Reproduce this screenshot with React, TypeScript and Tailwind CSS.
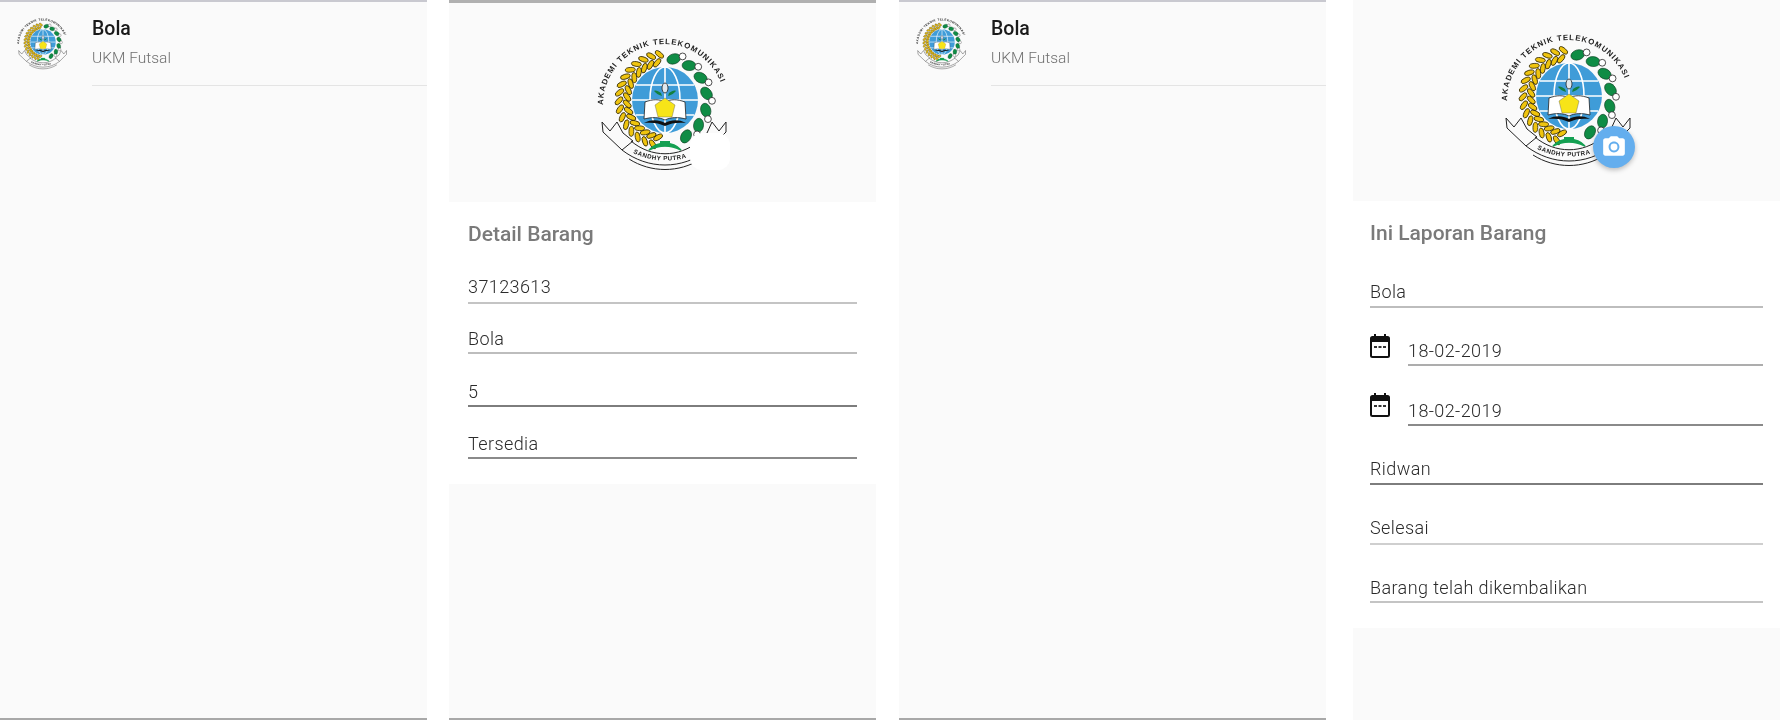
const font = { fontFamily: "Roboto, 'Liberation Sans', sans-serif" };

const grainAngles = Array.from({ length: 16 }, (_, i) => 258 - i * 10.5);
const leafAngles = Array.from({ length: 7 }, (_, i) => -78 + i * 23);

function polar(r: number, deg: number) {
  const a = (deg * Math.PI) / 180;
  return { x: 70 + r * Math.cos(a), y: 65 + r * Math.sin(a) };
}

function Logo({ id, className }: { id: string; className: string }) {
  return (
    <svg viewBox="0 0 140 140" className={className}>
      <defs>
        <path id={`${id}-top`} d="M8 70 A61 61 0 0 1 130 70" />
        <path id={`${id}-bottom`} d="M38 118 Q70 133 104 118" />
      </defs>
      <text fontSize="7.8" fontWeight="700" fill="#222" letterSpacing="1" fontFamily="'Liberation Sans', sans-serif">
        <textPath href={`#${id}-top`}>AKADEMI TEKNIK TELEKOMUNIKASI</textPath>
      </text>
      <circle cx="70" cy="65" r="33" fill="#3f9cd8" />
      <g fill="none" stroke="#fff" strokeWidth="1.6">
        <ellipse cx="70" cy="65" rx="15" ry="33" />
        <path d="M70 32V98M41 50H99M37 65H103M41 80H99" />
      </g>
      {grainAngles.map((deg) => {
        const a = polar(38, deg);
        const b = polar(46, deg + 5);
        return (
          <g key={deg} fill="#efc40f" stroke="#2e2604" strokeWidth="0.8">
            <ellipse cx={a.x} cy={a.y} rx="5" ry="2.4" transform={`rotate(${deg + 50} ${a.x} ${a.y})`} />
            <ellipse cx={b.x} cy={b.y} rx="5" ry="2.4" transform={`rotate(${deg - 40} ${b.x} ${b.y})`} />
          </g>
        );
      })}
      {leafAngles.map((deg, i) => {
        const p = polar(42, deg);
        const q = polar(47, deg + 10);
        return (
          <g key={deg}>
            <ellipse cx={p.x} cy={p.y} rx="7" ry="5" fill="#0f8c45" stroke="#0a3d20" strokeWidth="0.6" transform={`rotate(${deg + 60} ${p.x} ${p.y})`} />
            {i < 6 && <circle cx={q.x} cy={q.y} r="3.4" fill="#fff" stroke="#222" strokeWidth="0.8" />}
          </g>
        );
      })}
      <path d="M66 58c-3-2-5-3-7-2 2 2 4 4 8 5zM74 58c3-2 5-3 7-2-2 2-4 4-8 5z" fill="#14803f" />
      <ellipse cx="70" cy="53" rx="3" ry="5" fill="#dfe8ee" stroke="#222" strokeWidth="0.8" />
      <path d="M50 67c8-3 14-3 20 0 6-3 12-3 20 0l1 17c-8-2-15-2-21 1-6-3-13-3-21-1z" fill="#fff" stroke="#222" strokeWidth="0.8" />
      <path d="M49 88c8-4 15-3 21 0 6-3 13-4 21 0-8-1-15 0-21 3-6-3-13-4-21-3z" fill="#111" />
      <path d="M70 63l10 7-3 12H63l-3-12z" fill="#f7e418" stroke="#555" strokeWidth="0.4" />
      <path d="M54 115c8-9 24-9 32 0-10-5-22-5-32 0z" fill="#14a052" stroke="#14a052" strokeWidth="1.4" />
      <path d="M65 106h10v3H65z" fill="#14a052" />
      <g fill="none" stroke="#222" strokeWidth="1">
        <path d="M7 87l8 9 7-9 6 11 10 8-11 9L8 97z" />
        <path d="M131 87l-7 9-7-9-5 11-10 8 11 9 18-18z" />
        <path d="M27 115c26 20 60 20 86 0" />
        <path d="M36 106c20 17 48 17 68 0" />
        <path d="M34 124c22 14 50 14 72 0" />
      </g>
      <text fontSize="6.2" fontWeight="700" fill="#222" letterSpacing="0.5" fontFamily="'Liberation Sans', sans-serif">
        <textPath href={`#${id}-bottom`}>SANDHY PUTRA</textPath>
      </text>
    </svg>
  );
}

function CalendarIcon() {
  return (
    <svg viewBox="0 0 20 24" className="w-[20px] h-[24px] shrink-0">
      <path d="M5 0v4M15 0v4" stroke="#111" strokeWidth="2" />
      <rect x="1" y="3" width="18" height="20" rx="1.5" fill="none" stroke="#111" strokeWidth="2" />
      <rect x="1" y="3" width="18" height="5" fill="#111" />
      <path d="M4 12h3v2H4zM8.5 12h3v2h-3zM13 12h3v2h-3z" fill="#333" />
    </svg>
  );
}

function Field({ text, className }: { text: string; className: string }) {
  return (
    <div className={`flex items-end text-[18px] font-light leading-[24px] tracking-[0.4px] text-[#2b2b2b] ${className}`}>
      {text}
    </div>
  );
}

function ListPanel({ id, className }: { id: string; className: string }) {
  return (
    <div className={`w-[427px] h-full bg-[#fafafa] border-t-2 border-t-[#c9c9d0] border-b-2 border-b-[#a8a8a8] shrink-0 ${className}`}>
      <div className="flex">
        <div className="w-[92px] shrink-0 pl-[16px] pt-[15px]">
          <Logo id={id} className="w-[54px] h-[54px]" />
        </div>
        <div className="flex-1 h-[84px] border-b border-[#e4e4e4]">
          <div className="text-[19.5px] font-medium leading-[24px] mt-[15px] text-[#1a1a1a]">Bola</div>
          <div className="text-[15.5px] font-light leading-[20px] mt-[7px] text-[#6f6f6f]">UKM Futsal</div>
        </div>
      </div>
    </div>
  );
}

export default function App() {
  return (
    <div className="flex w-[1780px] h-[720px] bg-white overflow-hidden blur-[0.4px]" style={font}>
      <ListPanel id="a" className="" />

      <div className="w-[427px] h-full ml-[22px] bg-[#fafafa] border-t-[3px] border-t-[#b0b0b0] border-b-2 border-b-[#a8a8a8] shrink-0">
        <div className="relative h-[199px] flex items-center justify-center pl-[5px] pt-[5px]">
          <Logo id="b" className="w-[140px] h-[140px]" />
          <div className="absolute left-[241px] top-[130px] w-[40px] h-[37px] rounded-[12px] bg-white" />
        </div>
        <div className="bg-white px-[19px] pt-[18px] pb-[25px]">
          <div className="text-[21px] font-medium leading-[28px] text-[#7a7a7a]">Detail Barang</div>
          <Field text="37123613" className="h-[56px] pb-[3px] border-b-2 border-[#c4c4c4]" />
          <Field text="Bola" className="h-[50px] pb-[1px] border-b-2 border-[#bdbdbd]" />
          <Field text="5" className="h-[53px] pb-[1px] border-b-2 border-[#7d7d7d]" />
          <Field text="Tersedia" className="h-[52px] pb-[1px] border-b-2 border-[#8a8a8a]" />
        </div>
      </div>

      <ListPanel id="c" className="ml-[23px]" />

      <div className="w-[427px] h-full ml-[27px] bg-[#fafafa] shrink-0">
        <div className="relative h-[201px] flex items-center justify-center pl-[5px]">
          <Logo id="d" className="w-[140px] h-[140px]" />
          <div className="absolute left-[240px] top-[126px] w-[42px] h-[42px] rounded-full bg-[#64aeee] shadow-[0_2px_5px_rgba(0,0,0,0.25)] flex items-center justify-center">
            <svg viewBox="0 0 24 24" className="w-[26px] h-[26px]" fill="#fff">
              <path d="M12 15.2a3.2 3.2 0 1 0 0-6.4 3.2 3.2 0 0 0 0 6.4z" />
              <path d="M9 2L7.17 4H4c-1.1 0-2 .9-2 2v12c0 1.1.9 2 2 2h16c1.1 0 2-.9 2-2V6c0-1.1-.9-2-2-2h-3.17L15 2H9zm3 15c-2.76 0-5-2.24-5-5s2.24-5 5-5 5 2.24 5 5-2.24 5-5 5z" />
            </svg>
          </div>
        </div>
        <div className="bg-white pl-[17px] pr-[17px] pt-[18px] pb-[25px]">
          <div className="text-[21px] font-medium leading-[28px] text-[#7a7a7a]">Ini Laporan Barang</div>
          <Field text="Bola" className="h-[61px] pb-[2px] border-b-2 border-[#bdbdbd]" />
          <div className="flex items-end">
            <div className="w-[38px] shrink-0 pb-[8px]"><CalendarIcon /></div>
            <Field text="18-02-2019" className="flex-1 h-[58px] pb-[1px] border-b-2 border-[#adadad]" />
          </div>
          <div className="flex items-end">
            <div className="w-[38px] shrink-0 pb-[9px]"><CalendarIcon /></div>
            <Field text="18-02-2019" className="flex-1 h-[60px] pb-[1px] border-b-2 border-[#8a8a8a]" />
          </div>
          <Field text="Ridwan" className="h-[59px] pb-[2px] border-b-2 border-[#7d7d7d]" />
          <Field text="Selesai" className="h-[60px] pb-[3px] border-b-2 border-[#cfcfcf]" />
          <Field text="Barang telah dikembalikan" className="h-[58px] pb-[1px] border-b-2 border-[#c4c4c4]" />
        </div>
      </div>
    </div>
  );
}
